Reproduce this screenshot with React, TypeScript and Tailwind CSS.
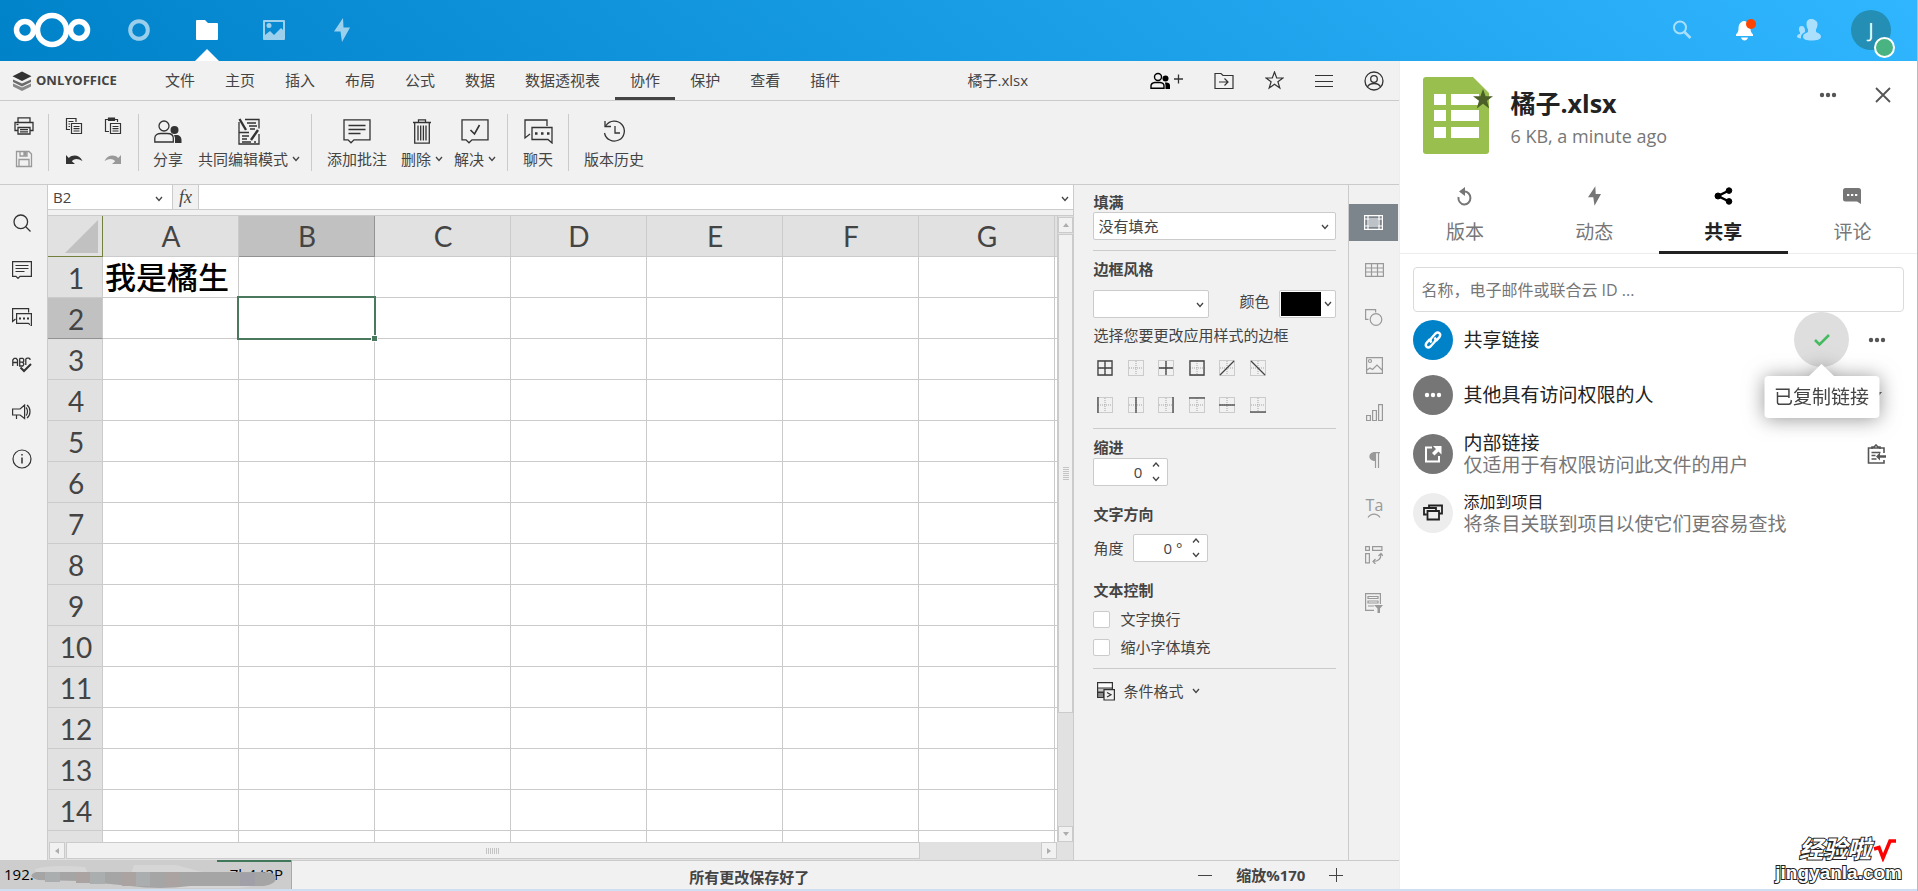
import { useState } from 'react';
import type { ReactNode } from 'react';

const menuTabs = ['文件', '主页', '插入', '布局', '公式', '数据', '数据透视表', '协作', '保护', '查看', '插件'];
// the last column and row are only a sliver at the edge, so they carry no label
const columns = ['A', 'B', 'C', 'D', 'E', 'F', 'G', ''];
const rows = ['1', '2', '3', '4', '5', '6', '7', '8', '9', '10', '11', '12', '13', '14', ''];

type IconProps = {
  w: number;
  h: number;
  children: ReactNode;
  fill?: string;
  stroke?: string;
  sw?: number;
  box?: string;
};

function Icon({ w, h, children, fill = 'none', stroke = 'currentColor', sw = 1, box }: IconProps) {
  return (
    <svg
      width={w}
      height={h}
      viewBox={box || `0 0 ${w} ${h}`}
      fill={fill}
      stroke={stroke}
      strokeWidth={sw}
      className="block shrink-0"
      aria-hidden="true"
    >
      {children}
    </svg>
  );
}

function Caret() {
  return (
    <Icon w={8} h={6} sw={1.3}>
      <path d="M1 1l3 3.500L7 1" />
    </Icon>
  );
}

function Dots({ color = 'currentColor' }: { color?: string }) {
  return (
    <Icon w={18} h={6} fill={color} stroke="none">
      <circle cx="3" cy="3" r="2.2" />
      <circle cx="9" cy="3" r="2.2" />
      <circle cx="15" cy="3" r="2.2" />
    </Icon>
  );
}

function Bolt({ w, h }: { w: number; h: number }) {
  return (
    <Icon w={w} h={h} box="0 0 16 24" fill="currentColor" stroke="none">
      <path d="M9 0L0 13.500h6.500L8 24l8-14.500H9.500z" />
    </Icon>
  );
}

/* ---------- top bar ---------- */

function TopBar() {
  return (
    <header className="flex h-[61px] shrink-0 items-center justify-between bg-[linear-gradient(40deg,#0082c9_0%,#30b6ff_100%)] text-white">
      <nav className="flex h-full items-center *:pb-[2px]">
        <a href="#home" aria-label="Nextcloud" className="mr-5 ml-3 block">
          <Icon w={80} h={36} sw={5.5}>
            <circle cx="13" cy="18" r="8.500" />
            <circle cx="40" cy="18" r="14.500" />
            <circle cx="67" cy="18" r="8.500" />
          </Icon>
        </a>
        <a href="#dashboard" aria-label="Dashboard" className="flex h-full w-[54px] items-center justify-center opacity-60">
          <Icon w={22} h={22} sw={4}>
            <circle cx="11" cy="11" r="8.800" />
          </Icon>
        </a>
        <a href="#files" aria-label="Files" className="relative flex h-full w-[82px] items-center justify-center">
          <Icon w={22} h={20} fill="white" stroke="none">
            <path d="M1 0h8l3 3h9a1 1 0 011 1v15a1 1 0 01-1 1H1a1 1 0 01-1-1V1a1 1 0 011-1z" />
          </Icon>
          <span className="absolute bottom-0 left-1/2 -translate-x-1/2">
            <Icon w={24} h={12} fill="white" stroke="none">
              <path d="M0 12L12 0l12 12z" />
            </Icon>
          </span>
        </a>
        <a href="#photos" aria-label="Photos" className="flex h-full w-[52px] items-center justify-center opacity-60">
          <Icon w={22} h={20} fill="white" stroke="none">
            <path fillRule="evenodd" d="M1 0h20a1 1 0 011 1v18a1 1 0 01-1 1H1a1 1 0 01-1-1V1a1 1 0 011-1zm1 2v13l5-4 4 4 7-7 2 2V2z" />
            <circle cx="6" cy="5.500" r="2.500" />
          </Icon>
        </a>
        <a href="#activity" aria-label="Activity" className="flex h-full w-[84px] items-center justify-center opacity-60">
          <Bolt w={16} h={24} />
        </a>
      </nav>
      <div className="flex h-full items-center pb-[2px]">
        <button aria-label="Search" className="flex h-full w-[62px] items-center justify-center opacity-60">
          <Icon w={20} h={20} sw={2}>
            <circle cx="8" cy="7.500" r="6" />
            <path d="M12.500 12l6 6" strokeWidth="2.600" />
          </Icon>
        </button>
        <button aria-label="Notifications" className="flex h-full w-[64px] items-center justify-center">
          <Icon w={22} h={22} fill="white" stroke="none">
            <path d="M10 2c-4 .5-5.500 4-5.500 7.500 0 3-1 4.500-2.500 6V17h17v-1.500c-1.500-1.500-2.500-3-2.500-6C16.500 6 14 2.500 10 2zM7 18.500h7c-.5 2-2 3-3.500 3s-3-1-3.500-3z" />
            <circle cx="17" cy="5" r="5" fill="#ff4402" />
          </Icon>
        </button>
        <button aria-label="Contacts" className="flex h-full w-[64px] items-center justify-center opacity-60">
          <Icon w={24} h={24} fill="white" stroke="none">
            <path d="M14 1c-3 0-4.700 2-4.500 5 .1 2 .6 4 1.500 5.200V14c-2.500 1.200-5 2.200-5 4.500 0 3 3.500 4 8.500 4S24 21.500 24 18.500c0-2.500-3-3.300-5-4.500v-2.800c1-1.200 1.400-3.200 1.500-5.200C20.500 3 17 1 14 1z" />
            <path d="M4.500 8C2.800 8 2 9.200 2 11c0 1.500.3 2.500 1 3.200v1.600C1.500 16.600 0 17 0 18.500c0 1 1.500 1.800 4 2-.5-4 2-5.500 4-6.600C8.200 10 7 8 4.500 8z" />
          </Icon>
        </button>
        <button aria-label="Account" className="relative mr-[26px] ml-[10px] flex size-10 items-center justify-center rounded-full bg-[#248eb5] text-xl">
          J
          <span className="absolute -right-1 -bottom-1 size-[21px] translate-y-1 rounded-full border-2 border-white bg-[#49b382]"></span>
        </button>
      </div>
    </header>
  );
}

/* ---------- editor header ---------- */

function MenuBar() {
  const [active, setActive] = useState('协作');

  return (
    <div className="flex h-10 shrink-0 items-stretch border-b border-[#cbcbcb]">
      <div className="flex w-[150px] shrink-0 items-center gap-1 pl-3 text-[13px] font-bold">
        <Icon w={20} h={20} stroke="none">
          <path d="M1 12.500l9 4 9-4v3L10 20l-9-4.500z" fill="#888" />
          <path d="M1 8.500l9 4 9-4v2.500l-9 4.500L1 11z" fill="#6b6b6b" />
          <path d="M10 .5l9.500 4.700L10 10 .5 5.200z" fill="#333" />
        </Icon>
        ONLYOFFICE
      </div>
      <nav className="flex items-stretch">
        {menuTabs.map(tab => (
          <button
            key={tab}
            onClick={() => setActive(tab)}
            className={`border-b-3 px-[15px] pt-[3px] ${tab === active ? 'border-[#444]' : 'border-transparent'}`}
          >
            {tab}
          </button>
        ))}
      </nav>
      <div className="flex flex-1 items-center justify-center pr-[10px]">橘子.xlsx</div>
      <div className="flex shrink-0 items-center text-[#333]">
        <button aria-label="Manage access" className="mr-[30px]">
          <Icon w={34} h={20}>
            <circle cx="8" cy="6" r="3.500" stroke="#000" strokeWidth="1.400" />
            <path d="M1 17.300v-2.500c0-2 2-3 4-3.300h5c2.500.3 4 1.300 4 3.300v2.500z" stroke="#000" strokeWidth="1.400" />
            <circle cx="15.500" cy="7.500" r="3" fill="#000" stroke="none" />
            <path d="M15 11.500h1.500c2 0 3.500 1.200 3.500 3V18h-4.500v-3.500z" fill="#000" stroke="none" />
            <path d="M24 8h9M28.500 3.500v9" strokeWidth="1.300" />
          </Icon>
        </button>
        <button aria-label="Open file location" className="mr-[31px]">
          <Icon w={20} h={18} sw={1.2}>
            <path d="M1 16.500V1.500h6l2 2h10v13zM5 10h9M10.500 6.500L14 10l-3.500 3.500" />
          </Icon>
        </button>
        <button aria-label="Favorite" className="mr-[31px]">
          <Icon w={19} h={19} sw={1.2}>
            <path d="M9.500 1l2.200 6h6.300l-5.100 3.800 1.900 6.200-5.300-3.800L4.200 17l1.900-6.200L1 7h6.300z" />
          </Icon>
        </button>
        <button aria-label="View settings" className="mr-[31px]">
          <Icon w={18} h={14}>
            <path d="M0 1.500h18M0 7.500h18M0 12.500h18" />
          </Icon>
        </button>
        <button aria-label="User" className="mr-[15px]">
          <Icon w={20} h={20} sw={1.3}>
            <circle cx="10" cy="10" r="9" />
            <circle cx="10" cy="8" r="3.300" />
            <path d="M3.500 16c1-2.500 3.500-3.500 6.500-3.500s5.500 1 6.500 3.500" />
          </Icon>
        </button>
      </div>
    </div>
  );
}

function ToolButton({ label, icon, caret }: { label: string; icon: ReactNode; caret?: boolean }) {
  return (
    <button className="flex flex-col items-center">
      <span className="flex h-[35px] items-center">{icon}</span>
      <span className="flex h-5 items-center gap-1 leading-5">
        {label}
        {caret && <Caret />}
      </span>
    </button>
  );
}

function Toolbar() {
  return (
    <div className="flex h-[84px] shrink-0 items-stretch border-b border-[#cbcbcb] py-[13px] text-[#444]">
      <div className="flex w-[49px] flex-col items-center justify-between border-r border-[#cbcbcb] py-[3px] text-[#333]">
        <button aria-label="Print">
          <Icon w={20} h={18} sw={1.3}>
            <path d="M4 5V.8h12V5M4 13.500H1V5.500h18v8h-3M4 10.500h12v6.500H4zM6 12.700h8M6 14.800h8" />
            <path d="M2.500 7.500h2" />
          </Icon>
        </button>
        <button aria-label="Save" className="text-[#999]">
          <Icon w={18} h={18} sw={1.3}>
            <path d="M1.500 1.500H14L16.500 4v12.500h-15zM4 16V9.500h10V16M5 1.500V6h7V1.500" />
            <path d="M9 2h2v3H9z" fill="currentColor" />
          </Icon>
        </button>
      </div>
      <div className="grid w-[90px] grid-cols-2 content-between justify-items-center border-r border-[#cbcbcb] px-[6px] py-[3px] text-[#333]">
        <button aria-label="Copy">
          <Icon w={18} h={18} sw={1.2}>
            <path d="M5 12.500H1.500v-11h9.500V5M3.500 4.500h5M3.500 7h1.500M3.500 9.500h1.500M6.500 6.500h10v10h-10zM8.500 9.500h6M8.500 11.700h6M8.500 14h6" />
          </Icon>
        </button>
        <button aria-label="Paste">
          <Icon w={18} h={18} sw={1.2}>
            <path d="M5 14.500H1.500V2.500h12V5M6.500 6.500h10v10h-10zM8.500 9.500h6M8.500 11.700h6M8.500 14h6" />
            <path d="M4.500 1h6v2.500h-6z" fill="currentColor" />
          </Icon>
        </button>
        <button aria-label="Undo">
          <Icon w={18} h={18} fill="#333" stroke="none">
            <path d="M1 5v9h9L6.800 11.200C9.500 8.300 13 8.300 17.500 11 14.500 5 8 4 3.800 8z" />
          </Icon>
        </button>
        <button aria-label="Redo">
          <Icon w={18} h={18} fill="#999" stroke="none">
            <path d="M17 5v9H8l3.200-2.800C8.500 8.300 5 8.300.5 11 3.500 5 10 4 14.200 8z" />
          </Icon>
        </button>
      </div>
      <div className="flex items-start gap-[15px] border-r border-[#cbcbcb] pr-[11px] pl-[14px]">
        <ToolButton
          label="分享"
          icon={
            <Icon w={28} h={23} sw={1.3} stroke="#333">
              <circle cx="10" cy="6" r="5" />
              <path d="M.8 22v-4c0-3 3-4.500 6-4.500h6.500c3.500 0 6 1.500 6 4.500v4z" />
              <circle cx="20.500" cy="10" r="4" fill="#333" stroke="none" />
              <path d="M20 15h2.500c3 0 5 2 5 5v3h-6.500v-5z" fill="#333" stroke="none" />
            </Icon>
          }
        />
        <ToolButton
          label="共同编辑模式"
          caret
          icon={
            <Icon w={22} h={27} sw={1.3} stroke="#333">
              <path d="M7 1.500h14v9M1 4v22h20V16M1 14.500h10M9 5h9M11 8h8M12 11h5M4 18h7M4 21h5M4 24h9M16 24h2" />
              <path d="M1.500 1l6.500 11M20 12l-7 10" strokeWidth="2.400" />
            </Icon>
          }
        />
      </div>
      <div className="flex items-start border-r border-[#cbcbcb] pr-[11px] pl-[15px]">
        <ToolButton
          label="添加批注"
          icon={
            <Icon w={28} h={25} sw={1.3} stroke="#333">
              <path d="M1 .8h26v20H11l-3 3-3-3H1zM5.500 6.500h17M5.500 10.500h17M5.500 14.500h12" />
            </Icon>
          }
        />
        <span className="w-[14px]"></span>
        <ToolButton
          label="删除"
          caret
          icon={
            <Icon w={18} h={25} sw={1.3} stroke="#333">
              <path d="M0 3.500h18M5.500 3V.8h7V3M1.700 4v20.200h14.600V4M5 6.500v15M7.700 6.500v15M10.400 6.500v15M13 6.500v15" />
            </Icon>
          }
        />
        <span className="w-[11px]"></span>
        <ToolButton
          label="解决"
          caret
          icon={
            <Icon w={28} h={25} sw={1.3} stroke="#333">
              <path d="M1 .8h26v20H11l-3 3-3-3H1z" />
              <path d="M9.500 11l4 4 5-9" strokeWidth="1.600" />
            </Icon>
          }
        />
      </div>
      <div className="flex items-start border-r border-[#cbcbcb] px-[15px]">
        <ToolButton
          label="聊天"
          icon={
            <Icon w={29} h={25} sw={1.3} stroke="#333">
              <path d="M6 15L1 19V1h22v6M8 8.500h20v15.500l-4-3.500H8z" />
              <path d="M11 14.500h2.500M17 14.500h2.500M23 14.500h2.500" strokeWidth="2.500" />
            </Icon>
          }
        />
      </div>
      <div className="flex items-start px-[15px]">
        <ToolButton
          label="版本历史"
          icon={
            <Icon w={23} h={24} sw={1.3} stroke="#333">
              <path d="M3 5.500A10 10 0 111.500 13M2 1v5.500h6M12 6v7h5" />
            </Icon>
          }
        />
      </div>
    </div>
  );
}

/* ---------- left rail ---------- */

function LeftRail() {
  return (
    <div className="w-12 shrink-0 border-r border-[#cbcbcb] pt-[19px] text-[#333]">
      <div className="flex h-[274px] flex-col justify-between pr-[3px] *:flex *:h-[37px] *:items-center *:justify-center">
        <button aria-label="Search">
          <Icon w={18} h={18} sw={1.3}>
            <circle cx="7.800" cy="7.800" r="6.800" />
            <path d="M12.500 12.500l5 5" />
          </Icon>
        </button>
        <button aria-label="Comments">
          <Icon w={20} h={18} sw={1.2}>
            <path d="M.6.6h18.800v14.800H8l-2 2-2-2H.6zM3.500 4.500h13M3.500 7.500h13M3.500 10.500h9" />
          </Icon>
        </button>
        <button aria-label="Chat">
          <Icon w={20} h={18} sw={1.2}>
            <path d="M3.500 11L.6 13.500V.6h16v4M4.600 5.600h14.800v11.800l-3-2H4.600z" />
            <path d="M7 10.500h2M11 10.500h2M15 10.500h2" strokeWidth="1.800" />
          </Icon>
        </button>
        <button aria-label="Spell check">
          <Icon w={20} h={16} sw={1.3}>
            <path d="M.8 9V3L2.200 1.300h2L5.500 3v6M.8 5.500h4.700M7.700 1.300V9h3l1-1.200V6.500l-1-1 1-1V2.300l-1-1h-3M7.700 5.200h3M18 3V2l-1-.8h-2L13.800 2v6" />
            <path d="M8.500 10.500l3.500 3.500 7-7" strokeWidth="2" />
          </Icon>
        </button>
        <button aria-label="Feedback">
          <Icon w={20} h={16} sw={1.2}>
            <path d="M.6 5h7.500l4.500-4v13.500L8.100 11H.6zM4.500 11v4M14 3.500c2 2 2 6 0 8M15 1c4 3 4 10 0 13" />
          </Icon>
        </button>
        <button aria-label="About">
          <Icon w={20} h={20} sw={1.2}>
            <circle cx="10" cy="10" r="9" />
            <path d="M10 8.500v6M10 5v1.500" strokeWidth="1.500" />
          </Icon>
        </button>
      </div>
    </div>
  );
}

/* ---------- spreadsheet ---------- */

function FormulaBar() {
  return (
    <div className="flex h-[25px] shrink-0 items-stretch border-b border-[#cbcbcb]">
      <div className="flex w-[125px] items-center border-r border-[#cbcbcb] bg-white pr-[9px] pl-[5px]">
        <input aria-label="Cell name" defaultValue="B2" className="min-w-0 flex-1 bg-transparent outline-none" />
        <button aria-label="Names" className="pt-1">
          <Caret />
        </button>
      </div>
      <button className="w-[26px] border-r border-[#cbcbcb] font-['Liberation_Serif',serif] text-lg leading-5 italic">fx</button>
      <input aria-label="Formula" className="min-w-0 flex-1 bg-white px-2 outline-none" />
      <button aria-label="Expand formula bar" className="bg-white pt-1 pr-1">
        <Caret />
      </button>
    </div>
  );
}

function ScrollArrow({ d, label, wide }: { d: string; label: string; wide?: boolean }) {
  return (
    <button
      aria-label={label}
      className={`flex shrink-0 items-center justify-center border border-[#cbcbcb] bg-[#f1f1f1] ${wide ? 'h-[17px] w-4' : 'h-4 w-[15px]'}`}
    >
      <Icon w={8} h={8} fill="#adadad" stroke="none">
        <path d={d} />
      </Icon>
    </button>
  );
}

function Sheet() {
  return (
    <div className="flex min-w-0 flex-1 flex-col">
      <FormulaBar />
      <div className="h-[5px] shrink-0"></div>
      <div className="flex min-h-0 flex-1 border-t border-[#cbcbcb]">
        <div className="relative min-h-0 min-w-0 flex-1 overflow-hidden bg-white">
          <table className="w-[1143px] table-fixed border-separate border-spacing-0 font-['Lato','Noto_Sans_CJK_SC',sans-serif] text-[28px] leading-8">
            <thead>
              <tr className="h-[41px] bg-[#e1e1e1] text-[#444]">
                <th className="w-[55px] border-r border-b border-[#71803c] p-0">
                  <div className="flex justify-end pr-1">
                    <Icon w={33} h={33} fill="#c1c1c1" stroke="none">
                      <path d="M33 0v33H0z" />
                    </Icon>
                  </div>
                </th>
                {columns.map(col => (
                  <th
                    key={col}
                    className={`w-[136px] border-r border-b p-0 pl-px font-normal ${
                      col === 'B' ? 'border-[#929292] bg-[#c1c1c1]' : 'border-[#cbcbcb]'
                    }`}
                  >
                    {col}
                  </th>
                ))}
              </tr>
            </thead>
            <tbody>
              {rows.map(row => (
                <tr key={row} className="h-[41px]">
                  <th
                    className={`border-r border-b p-0 pt-[2px] pl-[2px] font-normal text-[#444] ${
                      row === '2' ? 'border-r-[#cbcbcb] border-b-[#929292] bg-[#c1c1c1]' : 'border-[#cbcbcb] bg-[#e1e1e1]'
                    }`}
                  >
                    {row}
                  </th>
                  {columns.map(col => (
                    <td key={col} className="relative border-r border-b border-[#cbcbcb] p-0 pl-[2px] text-[31px] font-medium whitespace-nowrap text-black">
                      {col === 'A' && row === '1' && '我是橘生'}
                      {col === 'B' && row === '2' && (
                        <div className="absolute -inset-[2px] z-10 border-2 border-[#4a795e]">
                          <span className="absolute -right-1 -bottom-1 size-[7px] border border-white bg-[#4a795e]"></span>
                        </div>
                      )}
                    </td>
                  ))}
                </tr>
              ))}
            </tbody>
          </table>
        </div>
        <div className="flex w-4 shrink-0 flex-col items-start border-l border-[#cbcbcb] bg-[#e1e1e1] pt-px">
          <ScrollArrow label="Scroll up" d="M1 6l3-4 3 4z" />
          <div className="mt-px flex w-[15px] flex-[479_1_0] flex-col items-center justify-center gap-px border border-[#cbcbcb] bg-[#f1f1f1]">
            {[1, 2, 3, 4, 5, 6, 7].map(n => (
              <span key={n} className="h-px w-[6px] bg-[#c4c4c4]"></span>
            ))}
          </div>
          <div className="flex-[114_1_0]"></div>
          <ScrollArrow label="Scroll down" d="M1 2l3 4 3-4z" />
        </div>
      </div>
      <div className="flex h-[18px] shrink-0 bg-[#e1e1e1] pr-4 pl-px">
        <ScrollArrow label="Scroll left" wide d="M6 1L2 4l4 3z" />
        <div className="ml-px flex h-[17px] flex-[852_1_0] items-center justify-center gap-px border border-[#cbcbcb] bg-[#f1f1f1]">
          {[1, 2, 3, 4, 5, 6, 7].map(n => (
            <span key={n} className="h-[6px] w-px bg-[#c4c4c4]"></span>
          ))}
        </div>
        <div className="flex-[122_1_0]"></div>
        <ScrollArrow label="Scroll right" wide d="M2 1l4 3-4 3z" />
      </div>
    </div>
  );
}

/* ---------- cell settings ---------- */

// dotted cell outline with the chosen sides drawn solid
const borderShapes = [
  { name: 'All borders', d: 'M1 1h14v14H1zM8 1v14M1 8h14' },
  { name: 'No borders', d: '' },
  { name: 'Inner borders', d: 'M8 1v14M1 8h14' },
  { name: 'Outer borders', d: 'M1 1h14v14H1z' },
  { name: 'Diagonal up', d: 'M1 15L15 1' },
  { name: 'Diagonal down', d: 'M1 1l14 14' },
  { name: 'Left border', d: 'M1 0v16' },
  { name: 'Inner vertical', d: 'M8 0v16' },
  { name: 'Right border', d: 'M15 0v16' },
  { name: 'Top border', d: 'M0 1h16' },
  { name: 'Inner horizontal', d: 'M0 8h16' },
  { name: 'Bottom border', d: 'M0 15h16' },
];

function Spinner({ id, value }: { id: string; value: string }) {
  return (
    <div className="flex h-7 w-[75px] items-center rounded-xs border border-[#cbcbcb] bg-white pr-[7px]">
      <input id={id} defaultValue={value} className="min-w-0 flex-1 bg-transparent pr-[10px] text-right outline-none" />
      <div className="flex flex-col gap-2">
        <button aria-label="Increase">
          <Icon w={8} h={6} sw={1.3}>
            <path d="M1 4.500L4 1l3 3.500" />
          </Icon>
        </button>
        <button aria-label="Decrease">
          <Caret />
        </button>
      </div>
    </div>
  );
}

function SettingsPanel() {
  return (
    <div className="w-[275px] shrink-0 border-l border-[#cbcbcb] pt-[7px] pr-3 pl-[19px] leading-5">
      <label htmlFor="fill" className="block font-bold">填满</label>
      <div className="relative">
        <select id="fill" className="h-7 w-full appearance-none rounded-xs border border-[#cbcbcb] bg-white px-1 leading-6">
          <option>没有填充</option>
        </select>
        <span className="pointer-events-none absolute top-3 right-[7px]"><Caret /></span>
      </div>
      <hr className="mt-[10px] border-[#cbcbcb]" />
      <h3 className="mt-2 font-bold">边框风格</h3>
      <div className="mt-[11px] flex h-7 items-center justify-between">
        <div className="relative">
          <select aria-label="边框风格" className="h-7 w-[116px] appearance-none rounded-xs border border-[#cbcbcb] bg-white px-1">
            <option></option>
          </select>
          <span className="pointer-events-none absolute top-3 right-[5px]"><Caret /></span>
        </div>
        <div className="flex items-center gap-[10px]">
          <span className="pb-[6px]">颜色</span>
          <button aria-label="颜色" className="flex h-7 w-[57px] items-center gap-[3px] rounded-xs border border-[#cbcbcb] bg-white pl-px">
            <span className="h-6 w-10 bg-black"></span>
            <Caret />
          </button>
        </div>
      </div>
      <p className="mt-[7px]">选择您要更改应用样式的边框</p>
      <div className="mt-3 grid w-[183px] grid-cols-6 gap-y-[15px]">
        {borderShapes.map(shape => (
          <button key={shape.name} aria-label={shape.name} className="flex h-[22px] items-center pl-1">
            <Icon w={16} h={16}>
              <path d="M.5 .5h15v15H.5zM8 1v14M1 8h14" stroke="#a5a5a5" strokeDasharray="1 1" />
              <path d={shape.d} stroke="#444" strokeWidth="1.300" />
            </Icon>
          </button>
        ))}
      </div>
      <hr className="mt-3 border-[#cbcbcb]" />
      <label htmlFor="indent" className="mt-2 mb-px block font-bold">缩进</label>
      <Spinner id="indent" value="0" />
      <h3 className="mt-[18px] font-bold">文字方向</h3>
      <div className="mt-[10px] flex items-center gap-[10px]">
        <label htmlFor="angle">角度</label>
        <Spinner id="angle" value="0 °" />
      </div>
      <h3 className="mt-[18px] font-bold">文本控制</h3>
      <label className="mt-[9px] flex items-center gap-[10px]">
        <input type="checkbox" className="size-[17px] appearance-none rounded-xs border border-[#cbcbcb] bg-white" />
        文字换行
      </label>
      <label className="mt-2 flex items-center gap-[10px]">
        <input type="checkbox" className="size-[17px] appearance-none rounded-xs border border-[#cbcbcb] bg-white" />
        缩小字体填充
      </label>
      <hr className="mt-[11px] border-[#cbcbcb]" />
      <button className="mt-3 flex items-center gap-2 pl-1">
        <Icon w={18} h={19} sw={1.2} stroke="#333">
          <path d="M.6.6h14.800V7H.6z" fill="#fff" />
          <path d="M.6 6h14.800v4H.6z" fill="#c8c8c8" />
          <path d="M.6 10.500h6v5h-6z" fill="#8a8a8a" />
          <path d="M7 7.600h10.400v10.400H7z" fill="#f1f1f1" />
          <path d="M10 10.500l4 2.300-4 2.300" />
        </Icon>
        <span className="mr-px">条件格式</span>
        <Caret />
      </button>
    </div>
  );
}

function RightStrip() {
  return (
    <div className="w-[51px] shrink-0 border-l border-[#cbcbcb] pt-[19px] text-[#999]">
      <div className="flex h-[417px] flex-col justify-between *:flex *:h-[37px] *:items-center *:justify-center">
        <button aria-label="Cell settings" className="mr-px bg-[#7d858c] text-white">
          <Icon w={19} h={15} sw={1.2}>
            <path d="M.6.6h17.800v13.800H.6zM4 1v13M15 1v13M1 4h17M1 11h17" />
            <path d="M5 5h9v5H5z" fill="#bcc2c8" stroke="none" />
          </Icon>
        </button>
        <button aria-label="Table settings">
          <Icon w={19} h={14} sw={1.2}>
            <path d="M.6.6h17.800v12.800H.6zM6.500 0v14M12.500 0v14M0 5h19M0 9h19" />
          </Icon>
        </button>
        <button aria-label="Shape settings">
          <Icon w={18} h={17} sw={1.2}>
            <path d="M3.500 10.400H.6V.6h10v3" />
            <circle cx="11" cy="10.500" r="5.800" />
          </Icon>
        </button>
        <button aria-label="Image settings">
          <Icon w={17} h={17} sw={1.2}>
            <path d="M.6.6h15.800v15.800H.6zM1 13l3-2 2.500 1.500L11 8l5 5" />
            <circle cx="4" cy="4" r="1.500" />
          </Icon>
        </button>
        <button aria-label="Chart settings">
          <Icon w={17} h={17} sw={1.2}>
            <path d="M.6 11.500h3.800v5H.6zM6.600 6.500h3.800v10H6.600zM12.600.6h3.800v15.900h-3.800z" />
          </Icon>
        </button>
        <button aria-label="Paragraph settings">
          <Icon w={11} h={16}>
            <path d="M6 0v9C-1.500 9-1.500 0 6 0z" fill="currentColor" stroke="none" />
            <path d="M5 .6h6M6.500 0v16M9.500 0v16" strokeWidth="1.200" />
          </Icon>
        </button>
        <button aria-label="Text art settings">
          <span className="flex flex-col items-center text-base leading-4">
            Ta
            <Icon w={14} h={5} sw={1.2}>
              <path d="M1 4.500c3-4.500 9-4.500 12 0" />
            </Icon>
          </span>
        </button>
        <button aria-label="Pivot table settings">
          <Icon w={18} h={18} sw={1.2}>
            <path d="M.6.6h3.800v3.800H.6zM7.600.6h9.300v3.800H7.600zM.6 7.600h3.800v9.300H.6zM8 15.500c5 0 8-2.500 8-7.500M10.500 13L8 15.500l2.500 2.500M13.500 10L16 7.500l2 2.500" />
          </Icon>
        </button>
        <button aria-label="Slicer settings">
          <Icon w={18} h={20} sw={1.2}>
            <path d="M9 17.400H.6V.6h14.800V11M3 3.500h10v2H3zM3 8h10v2H3zM3 13h6" />
            <path d="M9 12h9l-3 3.500V20h-2.500v-4.500z" fill="currentColor" stroke="none" />
          </Icon>
        </button>
      </div>
    </div>
  );
}

/* ---------- status bar ---------- */

function StatusBar() {
  return (
    <div className="relative flex h-[29px] shrink-0 items-center border-t border-[#cbcbcb] font-bold">
      <div className="flex flex-1 justify-end pr-[389px]">
        <span className="pt-1">所有更改保存好了</span>
      </div>
      <div className="flex items-center gap-6 pr-14">
        <button aria-label="Zoom out">
          <Icon w={14} h={14}><path d="M0 7.500h14" /></Icon>
        </button>
        <span>缩放%170</span>
        <button aria-label="Zoom in">
          <Icon w={14} h={14}><path d="M0 7.500h14M7.500 0v14" /></Icon>
        </button>
      </div>
      {/* browser link hint over the sheet tabs */}
      <div className="absolute bottom-0 left-0 flex h-[29px] w-[292px] items-center border-r border-[#a8a8a8] bg-[#cdcdcd] pl-1 font-normal text-black">
        <span>192.</span>
        <span className="ml-auto pr-2">7h4.t3P</span>
        <span className="absolute top-0 right-0 h-[2px] w-[74px] bg-[#40765a]"></span>
        <div className="absolute top-1 left-[30px]">
          <Icon w={248} h={24} stroke="none">
            <path d="M5 5Q20 0 55 3L58 9H6zM104 1h42l30 8h-75zM70 18h130l22 4q-20 4-40 2-60 2-112-6z" fill="#d6d6d6" />
            <path d="M6 8h226q14 0 14 6t-12 8H160q-30 4-60 0L50 17 8 16q-12-4-2-8z" fill="#a5a5a5" />
            <path d="M15 8h15v10H15zM60 8h15v12H60zM106 8h14v14h-14z" fill="#abaeae" />
            <path d="M46 8h14v11H46zM92 8h14v14H92zM135 8h15v15h-15z" fill="#aaa3a2" />
            <path d="M210 9h15v13h-15z" fill="#a1a0a8" />
          </Icon>
        </div>
      </div>
    </div>
  );
}

/* ---------- details sidebar ---------- */

function SidebarTab({ label, active, children }: { label: string; active?: boolean; children: ReactNode }) {
  return (
    <button
      role="tab"
      aria-selected={!!active}
      className={`-mb-px flex flex-1 flex-col items-center border-b-[3px] text-[19px] leading-7 ${
        active ? 'border-[#222] font-bold text-[#222]' : 'border-transparent text-[#767676]'
      }`}
    >
      <span className="mb-[5px] flex h-[35px] items-center">{children}</span>
      <span className="h-[33px]">{label}</span>
    </button>
  );
}

function ShareRow({ icon, title, detail, small, children }: { icon: ReactNode; title: string; detail?: string; small?: boolean; children?: ReactNode }) {
  return (
    <li className={`flex items-center ${detail ? 'h-[59px]' : 'h-[55px]'}`}>
      {icon}
      <div className="ml-[10px] min-w-0 flex-1 text-[19px] leading-[22px]">
        <div className={`text-[#222] ${small ? 'text-base leading-[22px]' : ''}`}>{title}</div>
        {detail && <div className="text-[#767676]">{detail}</div>}
      </div>
      {children}
    </li>
  );
}

function Sidebar() {
  return (
    <aside className="flex w-[27%] shrink-0 flex-col border-l border-[#ededed] bg-white font-['Open_Sans','Noto_Sans_CJK_SC',sans-serif]">
      <div className="flex h-[117px] shrink-0 items-start pt-4 pr-[25px] pl-[23px]">
        <div className="relative">
          <Icon w={66} h={77} stroke="none">
            <path d="M3 0h47l16 16v58a3 3 0 01-3 3H3a3 3 0 01-3-3V3a3 3 0 013-3z" fill="#99bf4e" />
            <path d="M11 17h12v11H11zM28 17h28v11H28zM11 33h12v11H11zM28 33h28v11H28zM11 50h12v11H11zM28 50h28v11H28z" fill="#fff" />
          </Icon>
          <span className="absolute top-3 -right-1">
            <Icon w={20} h={20} stroke="none" fill="#4c5f27">
              <path d="M10 0l2.600 7.200H20l-6 4.600 2.200 7.700-6.200-4.700-6.200 4.700L6 11.800 0 7.200h7.400z" />
            </Icon>
          </span>
        </div>
        <div className="min-w-0 flex-1 pt-[10px] pl-[21px]">
          <h2 className="text-[25px] leading-8 font-bold text-[#222]">橘子.xlsx</h2>
          <p className="mt-[3px] text-lg leading-7 text-[#767676]">6 KB, a minute ago</p>
        </div>
        <button aria-label="Actions" className="mt-[15px] mr-[38px] text-[#555]">
          <Dots />
        </button>
        <button aria-label="Close" className="mt-[10px] mr-px text-[#555]">
          <Icon w={16} h={16} sw={1.8}>
            <path d="M1 1l14 14M15 1L1 15" />
          </Icon>
        </button>
      </div>
      <div role="tablist" className="flex shrink-0 border-b border-[#ededed]">
        <SidebarTab label="版本">
          <Icon w={16} h={20} sw={2}>
            <path d="M7 5.500A6 6.500 0 111.500 11" />
            <path d="M2 5.500L8 1v9z" fill="currentColor" stroke="none" />
          </Icon>
        </SidebarTab>
        <SidebarTab label="动态">
          <Bolt w={13} h={20} />
        </SidebarTab>
        <SidebarTab label="共享" active>
          <Icon w={19} h={18} stroke="#000" sw={2.5}>
            <path d="M15 3.500L4 9l11 5.500" />
            <path d="M15 .8a2.800 2.800 0 100 5.600 2.800 2.800 0 100-5.600zM4 6a3 3 0 100 6 3 3 0 100-6zM15 11.600a2.800 2.800 0 100 5.600 2.800 2.800 0 100-5.600z" fill="#000" strokeWidth="1" />
          </Icon>
        </SidebarTab>
        <SidebarTab label="评论">
          <Icon w={18} h={16} fill="currentColor" stroke="none">
            <path d="M2.500 0h13A2.500 2.500 0 0118 2.500V16l-4-2.500H2.500A2.500 2.500 0 010 11V2.500A2.500 2.500 0 012.500 0z" />
            <path d="M4 6h2.300v2H4zM8 6h2.300v2H8zM12 6h2.300v2H12z" fill="#fff" />
          </Icon>
        </SidebarTab>
      </div>
      <div className="min-h-0 flex-1 px-[13px] pt-[13px]">
        <input
          aria-label="搜索共享对象"
          placeholder="名称，电子邮件或联合云 ID ..."
          className="block h-[45px] w-full rounded-[4px] border border-[#dbdbdb] px-[7px] text-base text-[#222] outline-none placeholder:text-[#767676]"
        />
        <ul>
          <ShareRow
            title="共享链接"
            icon={
              <span className="flex size-10 items-center justify-center rounded-full bg-[#0082c9] text-white">
                <Icon w={20} h={20} sw={2.4}>
                  <path d="M8.500 12.500c-1.500-1.500-1.500-3 0-4.500l4-4.500c3-2.500 6 .5 4 3.500l-3.500 4M11.500 7.500c1.500 1.500 1.500 3 0 4.500l-4 4.500c-3 2.500-6-.5-4-3.500l3.500-4" />
                </Icon>
              </span>
            }
          >
            <div className="relative">
              <button aria-label="复制链接" className="flex size-[55px] items-center justify-center rounded-full bg-[#dedede] text-[#46ba61]">
                <Icon w={16} h={12} sw={2.6}>
                  <path d="M1 6l4.500 4.500L15 1" />
                </Icon>
              </button>
              <div
                role="tooltip"
                className="absolute top-16 left-1/2 z-10 -translate-x-1/2 rounded-[4px] bg-white px-[10px] py-2 text-[19px] leading-[26px] whitespace-nowrap text-[#444] drop-shadow-[0_1px_10px_rgba(77,77,77,0.6)]"
              >
                已复制链接
                <span className="absolute bottom-full left-1/2 -translate-x-1/2">
                  <Icon w={25} h={12} fill="white" stroke="none">
                    <path d="M0 12L12.500 0 25 12z" />
                  </Icon>
                </span>
              </div>
            </div>
            <button aria-label="操作" className="flex w-[55px] justify-center text-[#555]">
              <Dots />
            </button>
          </ShareRow>
          <ShareRow
            title="其他具有访问权限的人"
            icon={
              <span className="flex size-10 items-center justify-center rounded-full bg-[#767676] text-white">
                <Dots />
              </span>
            }
          >
            <button aria-label="展开" className="flex w-[55px] justify-center text-[#555]">
              <Icon w={10} h={6} fill="currentColor" stroke="none">
                <path d="M0 0h10L5 6z" />
              </Icon>
            </button>
          </ShareRow>
        </ul>
        <ul className="mt-[2px]">
          <ShareRow
            title="内部链接"
            detail="仅适用于有权限访问此文件的用户"
            icon={
              <span className="flex size-10 items-center justify-center rounded-full bg-[#767676] text-white">
                <Icon w={18} h={18} sw={2}>
                  <path d="M8 2.500H2V16.500h13V11" />
                  <path d="M9 1h8.500v8.500l-3-3-4 4-2.500-2.500 4-4z" fill="currentColor" stroke="none" />
                </Icon>
              </span>
            }
          >
            <button aria-label="复制内部链接" className="flex w-[55px] justify-center text-[#555]">
              <Icon w={20} h={20} sw={1.6}>
                <path d="M17 9V4H1.500v15H17v-3M5 5V3h2l2-2 2 2h2v2M4.500 8.500h9M4.500 11.500h4M4.500 15h5" />
                <path d="M9 12.500l4-4v2.800h6v2.400h-6v2.800z" fill="currentColor" stroke="none" />
              </Icon>
            </button>
          </ShareRow>
          <ShareRow
            title="添加到项目"
            detail="将条目关联到项目以使它们更容易查找"
            small
            icon={
              <span className="flex size-10 items-center justify-center rounded-full bg-[#ededed] text-[#222]">
                <Icon w={20} h={17} sw={1.8}>
                  <path d="M6 4V1.500h13v8h-2.500M3.500 10.500H1V4h12v2.500M4.500 7h11.500v8.500H4.500z" />
                </Icon>
              </span>
            }
          />
        </ul>
      </div>
      <div className="mr-[15px] mb-[5px] flex shrink-0 flex-col items-end font-['Liberation_Sans','Noto_Sans_CJK_SC',sans-serif] font-bold text-white">
        <div className="flex items-center gap-[2px] pr-[5px] text-2xl leading-6 italic">
          <span className="[paint-order:stroke_fill] [-webkit-text-stroke:2px_#222]">经验啦</span>
          <Icon w={24} h={24} stroke="#f00" sw={3.5}>
            <path d="M1 11l5-1.500L10 20 17 3h6" />
          </Icon>
        </div>
        <span className="text-[19px] leading-[22px] [paint-order:stroke_fill] [-webkit-text-stroke:2px_#222]">jingyanla.com</span>
      </div>
    </aside>
  );
}

export default function App() {
  return (
    <div className="flex h-screen flex-col overflow-hidden border-r border-[#b9b9b9] bg-[#f1f1f1] font-['Open_Sans','Noto_Sans_CJK_SC',sans-serif]">
      <TopBar />
      <div className="flex min-h-0 flex-1">
        <main className="flex min-w-0 flex-1 flex-col bg-[#f1f1f1] text-[15px] text-[#444]">
          <MenuBar />
          <Toolbar />
          <div className="flex min-h-0 flex-1">
            <LeftRail />
            <Sheet />
            <SettingsPanel />
            <RightStrip />
          </div>
          <StatusBar />
        </main>
        <Sidebar />
      </div>
      <div className="h-[2px] shrink-0 bg-[#cfdef0]"></div>
    </div>
  );
}
